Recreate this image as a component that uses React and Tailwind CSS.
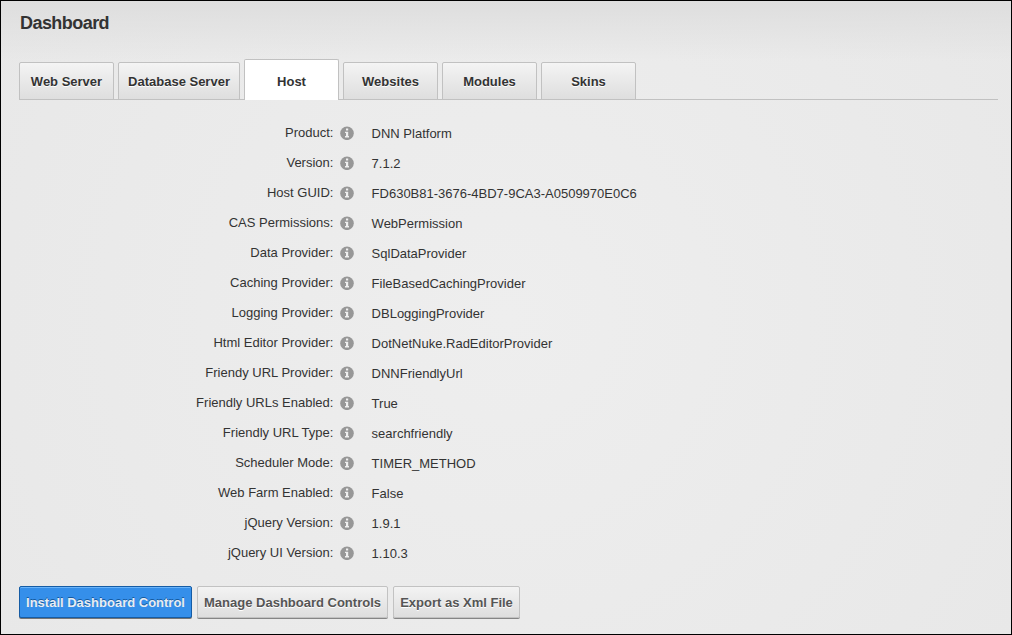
const tabs = [
  { label: 'Web Server', width: 'w-[95px]' },
  { label: 'Database Server', width: 'w-[122px]' },
  { label: 'Host', width: 'w-[95px]', active: true },
  { label: 'Websites', width: 'w-[95px]' },
  { label: 'Modules', width: 'w-[95px]' },
  { label: 'Skins', width: 'w-[95px]' },
];

const rows = [
  ['Product:', 'DNN Platform'],
  ['Version:', '7.1.2'],
  ['Host GUID:', 'FD630B81-3676-4BD7-9CA3-A0509970E0C6'],
  ['CAS Permissions:', 'WebPermission'],
  ['Data Provider:', 'SqlDataProvider'],
  ['Caching Provider:', 'FileBasedCachingProvider'],
  ['Logging Provider:', 'DBLoggingProvider'],
  ['Html Editor Provider:', 'DotNetNuke.RadEditorProvider'],
  ['Friendy URL Provider:', 'DNNFriendlyUrl'],
  ['Friendly URLs Enabled:', 'True'],
  ['Friendly URL Type:', 'searchfriendly'],
  ['Scheduler Mode:', 'TIMER_METHOD'],
  ['Web Farm Enabled:', 'False'],
  ['jQuery Version:', '1.9.1'],
  ['jQuery UI Version:', '1.10.3'],
];

function InfoIcon() {
  return (
    <svg className="ml-[6px] block h-[14px] w-[14px] shrink-0" viewBox="0 0 14 14">
      <circle cx="7" cy="7.3" r="6.8" fill="#979797" />
      <path d="M6 2.6h2.2v2H6zM5 5.8h3.2V10H9v1.4H5V10h1V7.1H5z" fill="#f0f0f0" />
    </svg>
  );
}

function Tab({ label, width, active }) {
  const look = active
    ? 'h-[41px] border-b-0 bg-white pt-[3px]'
    : 'h-[38px] border-b bg-linear-to-b from-[#f4f4f4] to-[#dedede] pt-[2px]';
  return (
    <button
      className={`${width} ${look} flex shrink-0 items-center justify-center whitespace-nowrap rounded-t-[2px] border border-[#c1c1c1] text-[13px] font-bold text-[#333] [text-shadow:0_1px_0_#fff]`}
    >
      {label}
    </button>
  );
}

function ActionButton({ children, width, primary }) {
  const look = primary
    ? 'border-[#155ca5] bg-[#358fea] text-[#e8edf3] shadow-[inset_0_1px_0_#68b3fa,0_1px_0_#747474] [text-shadow:0_-1px_0_#165a9e]'
    : 'border-[#c2c2c2] bg-linear-to-b from-[#f3f3f3] to-[#dedede] text-[#555] shadow-[0_1px_0_#858585] [text-shadow:0_1px_0_#fff]';
  return (
    <button className={`${width} ${look} flex h-8 items-center justify-center whitespace-nowrap rounded-[2px] border pt-[2px] text-[13px] font-bold`}>
      {children}
    </button>
  );
}

export default function App() {
  return (
    <main className="h-[635px] w-[1012px] overflow-hidden border border-black bg-[linear-gradient(to_bottom,#dedede_0px,rgba(222,222,222,0)_60px),radial-gradient(circle_at_center,#eeeeee,#e8e8e8_600px)] px-[18px] font-['Liberation_Sans',sans-serif] text-[#333]">
      <h1 className="h-[58px] pl-px pt-[9px] text-[18px] leading-[26px] font-bold tracking-[-0.55px]">Dashboard</h1>
      <nav className="flex h-[41px] w-[979px] items-end gap-1 bg-[linear-gradient(#c1c1c1,#c1c1c1)] bg-[length:100%_1px] bg-bottom bg-no-repeat">
        {tabs.map((tab) => (
          <Tab key={tab.label} {...tab} />
        ))}
      </nav>
      <dl className="mt-[18px]">
        {rows.map(([label, value]) => (
          <div key={label} className="flex h-[30px] items-start text-[13px] leading-[30px]">
            <dt className="w-[315px] pr-[0.6px] text-right">{label}</dt>
            <dd className="flex items-start">
              <span className="flex h-[30px] items-center"><InfoIcon /></span>
              <span className="ml-[17.6px] pt-px whitespace-nowrap">{value}</span>
            </dd>
          </div>
        ))}
      </dl>
      <footer className="mt-[18px] flex gap-[5px]">
        <ActionButton primary width="w-[173px]">Install Dashboard Control</ActionButton>
        <ActionButton width="w-[191px]">Manage Dashboard Controls</ActionButton>
        <ActionButton width="w-[127px]">Export as Xml File</ActionButton>
      </footer>
    </main>
  );
}
